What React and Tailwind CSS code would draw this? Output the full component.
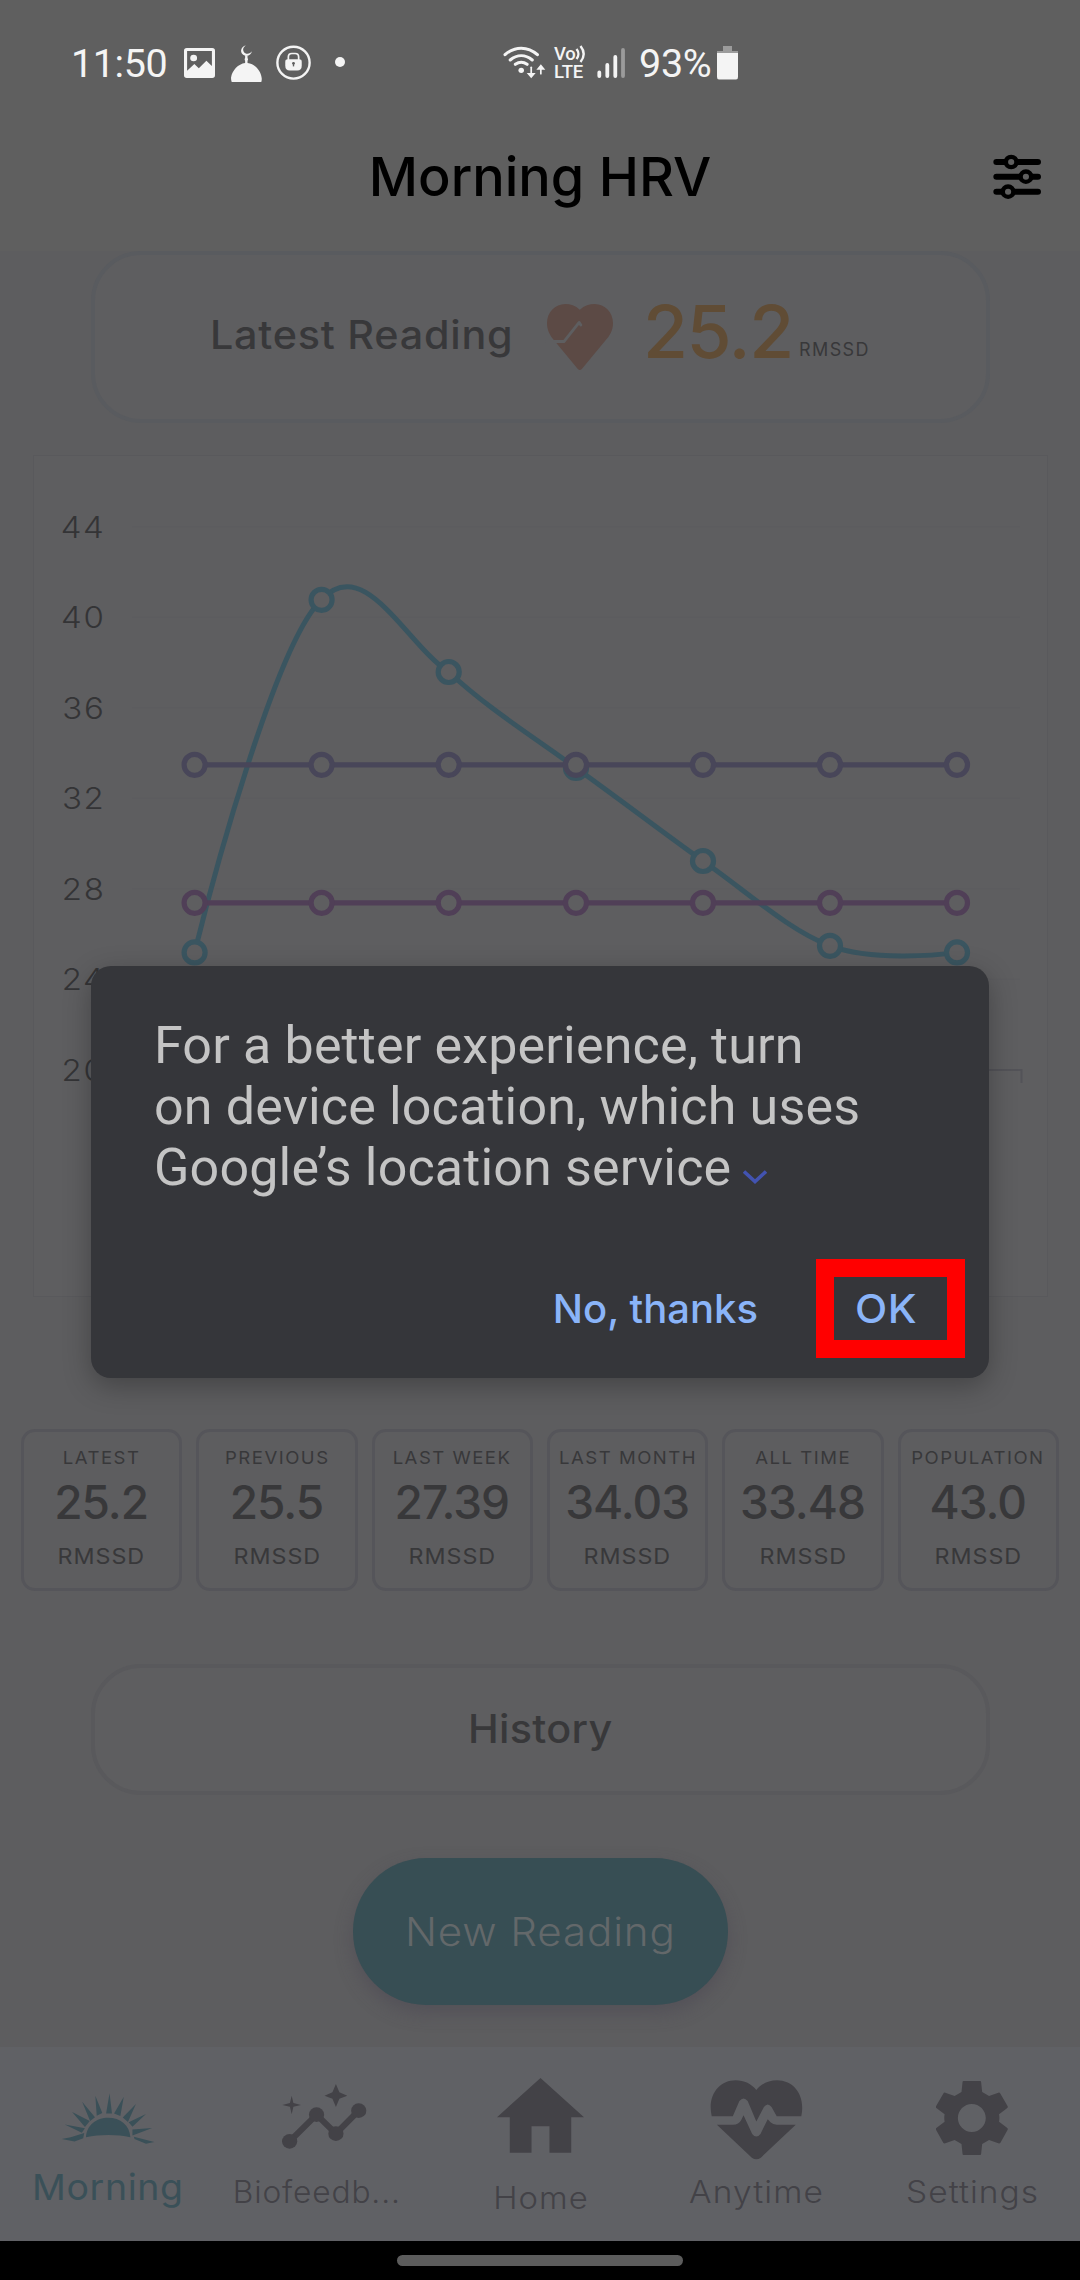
import React from "react";

/* ---------- status bar ---------- */

function StatusBar() {
  return (
    <div className="flex h-[102px] items-center pt-[26px] text-[#f4f4f4] font-['Roboto',sans-serif]">
      <span className="ml-[71px] w-[113px] text-[39.5px] leading-[48px] tracking-[-0.4px]">11:50</span>
      <svg className="-mt-0.5 h-[30px] w-[31px]" viewBox="534 141 90 90" preserveAspectRatio="none" fill="currentColor">
        <path fillRule="evenodd" d="M542 141H616Q624 141 624 149V223Q624 231 616 231H542Q534 231 534 223V149Q534 141 542 141ZM543 150V209L564 189L577 202L599 179L615 195V150Z" />
        <circle cx="562" cy="171" r="10" />
      </svg>
      <svg className="-mt-0.5 ml-4 h-[37px] w-[31px]" viewBox="671 132 90 111" preserveAspectRatio="none" fill="currentColor">
        <path d="M673 243Q671 236 671 230C675 207 692 189 712 186V179Q709 175 712 171V163H719V171Q722 175 719 179V186C740 189 757 207 760 230Q761 236 759 243Z" />
        <path d="M715 133C697 137 695 160 712 164C722 166 730 160 732 151C726 160 713 161 708 152C704 144 708 137 715 133Z" />
      </svg>
      <svg className="-mt-1 ml-3.5 h-[35px] w-[35px]" viewBox="801 135 102 103" preserveAspectRatio="none" fill="none" stroke="currentColor">
        <circle cx="852" cy="187" r="47" strokeWidth="7" />
        <path d="M837 180V170Q837 160 847 160H857Q867 160 867 170V180" strokeWidth="5" />
        <path fill="currentColor" stroke="none" d="M836 177H868Q876 177 876 184V196Q876 210 863 210H841Q828 210 828 196V184Q828 177 836 177Z" />
        <path d="M852 187V198" stroke="#5f5f5f" strokeWidth="4" />
        <circle cx="852" cy="189" r="4" fill="#5f5f5f" stroke="none" />
      </svg>
      <span className="-mt-1 ml-6 h-2.5 w-2.5 rounded-full bg-[#f4f4f4]" />
      <svg className="-mt-1 ml-[158px] h-[33px] w-[43px]" viewBox="1461 135 125 99" preserveAspectRatio="none" fill="none" stroke="currentColor" strokeLinecap="round" strokeWidth="9">
        <path d="M1467 161C1495 135 1533 135 1561 161M1482 177C1502 160 1526 160 1546 177M1497 190C1508 182 1520 182 1531 190" />
        <circle cx="1514" cy="208" r="8" fill="currentColor" stroke="none" />
        <path strokeWidth="5" d="M1543 199V224" />
        <path strokeWidth="5" d="M1571 218V198" />
        <path fill="currentColor" stroke="none" d="M1530 216H1556L1543 232ZM1558 206H1584L1571 190Z" />
      </svg>
      <div className="-mt-[3px] ml-2 flex h-[36px] w-8 flex-col text-[18.5px] leading-[18px] font-medium">
        <span className="flex tracking-[-0.4px]">
          Vo
          <svg className="h-[18px] w-[10px] shrink-0" viewBox="0 0 10 18" fill="none" stroke="currentColor" strokeWidth="2.400">
            <path d="M1.500 4C4 7 4 11 1.500 14M5.500 1C9.500 6 9.500 12 5.500 17" />
          </svg>
        </span>
        <span className="tracking-[-0.1px]">LTE</span>
      </div>
      <svg className="-mt-1 ml-[11px] h-[31px] w-7" viewBox="0 0 28 31" stroke="currentColor" strokeWidth="3.800" strokeLinecap="round">
        <path d="M2.300 25.500V29M10.300 18V29M18.300 10V29" />
        <path d="M26 3V29" stroke="#9b9b9b" />
      </svg>
      <span className="ml-[14px] text-[39.5px] leading-[48px] tracking-[-0.3px]">93%</span>
      <svg className="-mt-0.5 ml-1.5 h-[34px] w-[21px]" viewBox="0 0 21 34">
        <path d="M6 0H15V5H21V9H0V5H6Z" fill="#9b9b9b" />
        <path d="M0 7H21V31Q21 33.500 19 33.500H2Q0 33.500 0 31Z" fill="#f4f4f4" />
      </svg>
    </div>
  );
}

function Header() {
  return (
    <div className="grid h-[149px] grid-cols-[140px_1fr_140px] items-center">
      <span />
      <h1 className="text-center text-[54px] leading-[64px] font-medium text-black">Morning HRV</h1>
      <svg className="ml-[53px] h-[46px] w-12" viewBox="1314 463 140 138" preserveAspectRatio="none" fill="#5f5f5f" stroke="#000" strokeLinecap="round">
        <path strokeWidth="18" d="M1324 487H1445M1324 531H1445M1324 576H1445" />
        <circle cx="1367" cy="487" r="15.500" strokeWidth="13" />
        <circle cx="1410" cy="531" r="15.500" strokeWidth="13" />
        <circle cx="1358" cy="576" r="15.500" strokeWidth="13" />
      </svg>
    </div>
  );
}

/* ---------- content ---------- */

function LatestReading() {
  return (
    <section className="ml-[91px] flex h-[172px] w-[899px] items-center rounded-[50px] border-4 border-[#595b5f] bg-[#5e5e60] pl-[115px] text-[#38383a]">
      <span className="w-[337px] pb-[4px] text-[39px] leading-[48px] font-medium whitespace-nowrap">
        <span className="inline-block origin-left scale-x-[1.06] tracking-[0.700px]">Latest Reading</span>
      </span>
      <svg className="h-[66px] w-[66px] overflow-visible" viewBox="51 43 195 197" preserveAspectRatio="none" fill="none">
        <path d="M148 60C135 48 120 43 105 43C75 43 51 68 51 100C51 122 60 138 73 153L142 237Q148 243 154 237L223 153C237 138 246 122 246 100C246 68 222 43 192 43C177 43 161 48 148 60Z" fill="#5c4a45" />
        <path d="M49 155H101L146 98L151 106" stroke="#5e5e60" strokeWidth="8.500" strokeLinejoin="round" strokeLinecap="round" />
      </svg>
      <span className="ml-[30px] w-[156px] pb-[11px] text-[73px] leading-[80px] font-medium tracking-[-1.400px] text-[#604c35]">25.2</span>
      <span className="pt-[25px] text-[18px] leading-6 tracking-[1.400px]">RMSSD</span>
    </section>
  );
}

const xs = [194.6, 321.6, 448.7, 576, 703, 830, 957];
const readings = [952.4, 599.8, 672, 768, 861, 945.8, 952.4];
const ticks = [44, 40, 36, 32, 28, 24, 20];

function Series({ ys, color }) {
  return xs.map((x, i) => <circle key={x} cx={x} cy={ys[i]} r="10.500" fill="#5e5e60" stroke={color} strokeWidth="5.200" />);
}

function Chart() {
  return (
    <section className="mt-8 ml-[33px] h-[842px] w-[1015px] bg-[#5e5e60] outline-1 -outline-offset-1 outline-[#59595c]">
      <svg className="h-full w-full font-['Inter',sans-serif]" viewBox="33 455 1015 842" fill="none">
        {ticks.map((t, i) => (
          <g key={t}>
            {t !== 20 && <path d={`M132 ${526.8 + i * 90.5}H1020`} stroke="#5c5c5f" strokeWidth="1.500" />}
            <text transform={`translate(105.500 ${537.6 + i * 90.5}) scale(1.1 1)`} textAnchor="end" fontSize="30" fontWeight="300" letterSpacing="1.500" fill="#343436">
              {t}
            </text>
          </g>
        ))}
        <path d="M132 1070H1021.500V1083" stroke="#535358" strokeWidth="2" />
        <path
          d="M194.600 952.400C213 878 277 640 321.600 599.800C364 553 406.400 644 448.700 672C491 711 534 737 576 768C618 798 661 831 703 861C745 890 788 930 830 945.800C872 961 936 955.500 957 952.400"
          stroke="#3a5560"
          strokeWidth="5"
        />
        <Series ys={readings} color="#3a5560" />
        <path d="M194.600 764.800H957" stroke="#484659" strokeWidth="5.200" />
        <Series ys={xs.map(() => 764.8)} color="#484659" />
        <path d="M194.600 902.800H957" stroke="#503f57" strokeWidth="5.200" />
        <Series ys={xs.map(() => 902.8)} color="#503f57" />
      </svg>
    </section>
  );
}

const stats = [
  ["LATEST", "25.2"],
  ["PREVIOUS", "25.5"],
  ["LAST WEEK", "27.39"],
  ["LAST MONTH", "34.03"],
  ["ALL TIME", "33.48"],
  ["POPULATION", "43.0"],
];

function Stats() {
  return (
    <section className="mt-[132px] ml-[21px] grid h-[168px] w-[1038px] grid-cols-6 gap-[14px] text-[#38383a]">
      {stats.map(([label, value]) => (
        <div key={label} className="flex h-[162px] flex-col items-center rounded-[14px] border-[3px] border-[#55555a] whitespace-nowrap">
          <span className="mt-[14px] scale-x-[1.06] text-[17.5px] leading-6 tracking-[1.400px]">{label}</span>
          <span className="mt-[8px] mr-px text-[46px] leading-[48px] font-medium tracking-[-1px]">{value}</span>
          <span className="mt-[16px] scale-x-[1.06] text-[22px] leading-7 tracking-[0.900px]">RMSSD</span>
        </div>
      ))}
    </section>
  );
}

/* ---------- bottom navigation ---------- */

function NavItem({ label, className, iconClass, labelClass, viewBox, children }) {
  return (
    <div className={"flex w-[216px] flex-col items-center " + className}>
      <svg className={iconClass} viewBox={viewBox} preserveAspectRatio="none" fill="currentColor">
        {children}
      </svg>
      <span className={"leading-10 whitespace-nowrap " + labelClass}>{label}</span>
    </div>
  );
}

function BottomNav() {
  return (
    <nav className="flex h-[194px] bg-[#606165] text-[#434247]">
      <NavItem label="Morning" className="pt-[46px] text-[#3a5058]" iconClass="mr-px h-[51px] w-[94px]" labelClass="mt-[23px] text-[36px] scale-x-[1.04] tracking-[0.600px] font-normal" viewBox="178 217 271 150">
        <path d="M250 347C252 312 280 290 314 290C349 290 376 312 378 347C340 338 290 338 250 347Z" />
        <path d="M180 352L206 347L245 335L242 350L217 360ZM189 310L247 321L238 334ZM210 273L261 299L247 317ZM239 243L276 288L262 299ZM277 225L297 276L281 284ZM318 218L325 277L308 277ZM359 228L349 285L331 277ZM394 249L371 302L356 289ZM423 279L384 316L373 303ZM441 320L384 342L384 324ZM447 361L388 346L390 352L423 366Z" />
      </NavItem>
      <NavItem label="Biofeedb..." className="pt-[37px]" iconClass="h-[65px] w-[85px]" labelClass="mt-[23px] mr-[15px] text-[30.500px] scale-x-[1.04] tracking-[0.800px] font-light" viewBox="818 191 246 195">
        <path d="M840 363L918 283L974 340L1040 271" fill="none" stroke="currentColor" strokeWidth="18" />
        <circle cx="840" cy="363" r="22" />
        <circle cx="918" cy="283" r="22" />
        <circle cx="974" cy="340" r="22" />
        <circle cx="1040" cy="271" r="22" />
        <path d="M974 191L984 216L1007 226L984 235L974 260L964 235L941 226L964 216ZM846 226L851 248L873 254L851 259L846 282L841 259L819 254L841 248Z" />
      </NavItem>
      <NavItem label="Home" className="pt-[31px]" iconClass="h-[75px] w-[87px]" labelClass="mt-[25px] -mr-px text-[31px] scale-x-[1.06] tracking-[0.900px] font-light" viewBox="1442 172 252 227">
        <path d="M1568 172L1694 291H1657V398H1594V318H1542V398H1479V291H1442Z" />
      </NavItem>
      <NavItem label="Anytime" className="pt-[33px]" iconClass="h-20 w-[93px]" labelClass="mt-3 -mr-px text-[31px] scale-x-[1.08] tracking-[1.050px] font-light" viewBox="493 179 269 239">
        <path d="M498 287C484 225 520 180 567 180C592 180 613 191 627 209C641 191 662 180 687 180C735 180 770 225 757 287H686L671 260Q660 245 649 260L627 303L602 242Q590 227 578 242L559 287Z" />
        <path d="M513 313H559Q577 311 583 299L590 284L615 340Q627 356 639 340L660 296L668 305Q675 312 686 313H741L640 411Q627 421 614 411Z" />
      </NavItem>
      <NavItem label="Settings" className="pt-[34px]" iconClass="h-[74px] w-[72px]" labelClass="mt-[17px] -mr-px text-[31px] scale-x-[1.08] tracking-[0.950px] font-light" viewBox="1150 183 209 222">
        <path
          fillRule="evenodd"
          d="M1230 183H1278Q1281 183 1281 187L1284 216L1304 228L1331 218Q1335 217 1337 221L1358 259Q1359 262 1357 264L1333 283Q1335 294 1333 305L1357 324Q1359 326 1358 329L1337 368Q1335 371 1331 370L1304 360L1284 372L1281 401Q1281 405 1278 405H1230Q1227 405 1227 401L1224 372L1204 360L1177 370Q1173 371 1171 368L1150 329Q1149 326 1151 324L1175 305Q1173 294 1175 283L1151 264Q1149 262 1150 259L1171 221Q1173 217 1177 218L1204 228L1224 216L1227 187Q1227 183 1230 183ZM1254 252C1232 252 1213.500 271 1213.500 294C1213.500 317 1232 336 1254 336C1276 336 1294.500 317 1294.500 294C1294.500 271 1276 252 1254 252Z"
        />
      </NavItem>
    </nav>
  );
}

/* ---------- location dialog ---------- */

function LocationDialog() {
  return (
    <div role="dialog" className="absolute top-[966px] left-[91px] h-[412px] w-[898px] rounded-[20px] bg-[#35363a] pt-[49px] pl-[63px] shadow-[0_8px_28px_rgba(0,0,0,0.28)]">
      <p className="text-[52px] leading-[61px] tracking-[0.160px] whitespace-nowrap text-[#c4c4c4] font-['Roboto',sans-serif]">
        For a better experience, turn
        <br />
        on device location, which uses
        <br />
        Google’s location service
        <svg className="-mb-px ml-3 inline-block h-4 w-6 align-baseline" viewBox="0 0 24 16" fill="none" stroke="#4253b0" strokeWidth="3.600">
          <path d="M1 1.500L12 11.500L23 1.500" />
        </svg>
      </p>
      <div className="mt-[61px] flex items-center justify-end pr-6 text-[40px] leading-[48px] font-medium text-[#8ab4f8]">
        <button className="mr-[58px]">No, thanks</button>
        <button className="flex h-[99px] w-[149px] items-center border-[18px] border-[#ff0000] pl-[20.5px] whitespace-nowrap">
          <span className="origin-left scale-x-[1.05] tracking-[0.500px]">OK</span>
        </button>
      </div>
    </div>
  );
}

export default function App() {
  return (
    <div className="relative flex h-[2280px] w-[1080px] flex-col overflow-hidden bg-[#5d5d5f] font-['Inter',sans-serif]">
      <header className="bg-[#5f5f5f]">
        <StatusBar />
        <Header />
      </header>
      <main className="h-[1796px]">
        <LatestReading />
        <Chart />
        <Stats />
        <button className="mt-[67px] ml-[91px] block h-[131px] w-[899px] rounded-[50px] border-4 border-[#59595c] bg-[#5e5e60] pb-0.5 text-[39px] leading-[48px] font-medium text-[#38383a]">
          <span className="inline-block scale-x-[1.06] tracking-[0.300px]">History</span>
        </button>
        <button className="mt-[63px] ml-[353px] block h-[147px] w-[375px] rounded-[73px] bg-[#374e54] text-[39px] leading-[48px] font-light text-[#63686a] shadow-[0_8px_18px_rgba(70,66,80,0.45)]">
          <span className="inline-block scale-x-[1.08] tracking-[0.800px]">New Reading</span>
        </button>
      </main>
      <BottomNav />
      <footer className="flex h-[39px] justify-center bg-black pt-3.5">
        <span className="h-[11px] w-[286px] rounded-full bg-[#5c5c5c]" />
      </footer>
      <LocationDialog />
    </div>
  );
}
